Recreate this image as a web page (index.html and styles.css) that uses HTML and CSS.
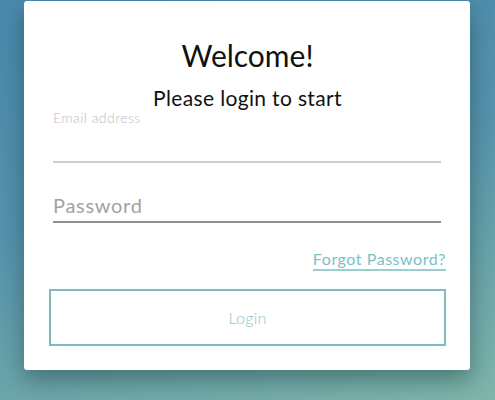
FILE: index.html
```html
<!DOCTYPE html>
<html lang="en">
<head>
    <meta charset="UTF-8">
    <meta name="viewport" content="width=device-width, initial-scale=1.0">
    <title>Login</title>
    <link rel="stylesheet" href="styles.css">
</head>
<body>
    <div class="login-card">
        <h1 class="title">Welcome!</h1>
        <p class="subtitle">Please login to start</p>
        <form class="login-form">
            <div class="field">
                <label for="email" class="field-label">Email address</label>
                <input type="email" id="email" class="field-input email-input">
            </div>
            <div class="field">
                <input type="password" id="password" class="field-input password-input" placeholder="Password">
            </div>
            <div class="forgot-row">
                <a href="#" class="forgot-link">Forgot Password?</a>
            </div>
            <button type="button" class="login-btn">Login</button>
        </form>
    </div>
</body>
</html>
```

FILE: styles.css
```css
html, body {
    height: 100%;
}

body {
    margin: 0;
    font-family: Lato, "Open Sans", sans-serif;
    background: linear-gradient(165deg, #4a89ad 0%, #5593ae 45%, #7fb6aa 100%);
    overflow: hidden;
}

.login-card {
    box-sizing: border-box;
    width: 446px;
    height: 369px;
    margin: 1px 0 0 24px;
    padding: 36px 24px 0 25px;
    background: #fff;
    border-radius: 3px;
    box-shadow: 0 10px 24px rgba(20, 50, 50, 0.45);
}

.title {
    margin: 0;
    font-size: 30px;
    line-height: 36px;
    font-weight: 400;
    color: #111;
    text-align: center;
}

.subtitle {
    margin: 12px 0 0;
    font-size: 21px;
    line-height: 26px;
    letter-spacing: 0.35px;
    color: #111;
    text-align: center;
}

.login-form {
    margin: 0;
}

.field {
    margin: 0 5px 0 4px;
}

.field-label {
    display: block;
    font-size: 14px;
    line-height: 14px;
    font-weight: 300;
    letter-spacing: 0.45px;
    color: #bcbcc0;
}

.field-input {
    display: block;
    box-sizing: border-box;
    width: 100%;
    height: 32px;
    padding: 0;
    border: none;
    border-bottom: 2px solid #cdcdd2;
    outline: none;
    font-family: inherit;
    font-size: 20px;
    letter-spacing: 0.7px;
    color: #333;
    background: transparent;
}

.email-input {
    height: 38px;
}

.password-input {
    margin-top: 28px;
    padding-bottom: 3px;
    border-bottom-color: #8e8e8e;
}

.password-input::placeholder {
    color: #a2a2a2;
}

.forgot-row {
    margin-top: 26px;
    text-align: right;
}

.forgot-link {
    display: inline-block;
    font-size: 16px;
    line-height: 20px;
    letter-spacing: 0.55px;
    color: #79c1c6;
    text-decoration: none;
    border-bottom: 2px solid #98cfd2;
}

.login-btn {
    display: block;
    box-sizing: border-box;
    width: 100%;
    height: 57px;
    margin-top: 18px;
    border: 2px solid #7cbcbf;
    background: #fff;
    font-family: inherit;
    font-size: 16px;
    font-weight: 300;
    letter-spacing: 0.3px;
    color: #7fc8cc;
    cursor: pointer;
}
```
